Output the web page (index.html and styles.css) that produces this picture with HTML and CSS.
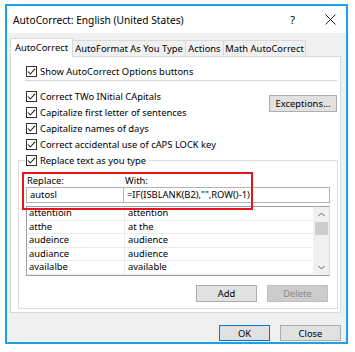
FILE: index.html
```html
<!DOCTYPE html>
<html lang="en">
<head>
    <meta charset="UTF-8">
    <title>AutoCorrect: English (United States)</title>
    <link rel="stylesheet" href="styles.css">
</head>
<body>

<div class="window">
    <div class="titlebar">
        <span class="title">AutoCorrect: English (United States)</span>
        <span class="help">?</span>
        <svg class="close-x" width="11" height="11" viewBox="0 0 11 11">
            <path d="M0.5 0.5 L10.5 10.5 M10.5 0.5 L0.5 10.5" stroke="#222" stroke-width="1" fill="none"/>
        </svg>
    </div>

    <div class="client">
        <div class="tabs">
            <div class="tab active">AutoCorrect</div>
            <div class="tab tab-format">AutoFormat As You Type</div>
            <div class="tab tab-actions">Actions</div>
            <div class="tab tab-math">Math AutoCorrect</div>
        </div>

        <div class="panel">
            <div class="check top-check">
                <svg class="box" width="11" height="11" viewBox="0 0 11 11"><rect x="0.5" y="0.5" width="10" height="10" fill="#fff" stroke="#333"/><path d="M2 5.5 L4.3 8 L9 2.8" stroke="#222" stroke-width="1.1" fill="none"/></svg>
                Show AutoCorrect Options buttons
            </div>
            <div class="sep"></div>

            <div class="options">
                <div class="checks">
                    <div class="check">
                        <svg class="box" width="11" height="11" viewBox="0 0 11 11"><rect x="0.5" y="0.5" width="10" height="10" fill="#fff" stroke="#333"/><path d="M2 5.5 L4.3 8 L9 2.8" stroke="#222" stroke-width="1.1" fill="none"/></svg>
                        Correct TWo INitial CApitals
                    </div>
                    <div class="check">
                        <svg class="box" width="11" height="11" viewBox="0 0 11 11"><rect x="0.5" y="0.5" width="10" height="10" fill="#fff" stroke="#333"/><path d="M2 5.5 L4.3 8 L9 2.8" stroke="#222" stroke-width="1.1" fill="none"/></svg>
                        Capitalize first letter of sentences
                    </div>
                    <div class="check">
                        <svg class="box" width="11" height="11" viewBox="0 0 11 11"><rect x="0.5" y="0.5" width="10" height="10" fill="#fff" stroke="#333"/><path d="M2 5.5 L4.3 8 L9 2.8" stroke="#222" stroke-width="1.1" fill="none"/></svg>
                        Capitalize names of days
                    </div>
                    <div class="check">
                        <svg class="box" width="11" height="11" viewBox="0 0 11 11"><rect x="0.5" y="0.5" width="10" height="10" fill="#fff" stroke="#333"/><path d="M2 5.5 L4.3 8 L9 2.8" stroke="#222" stroke-width="1.1" fill="none"/></svg>
                        Correct accidental use of cAPS LOCK key
                    </div>
                </div>
                <div class="btn exceptions">Exceptions...</div>
            </div>

            <fieldset class="group">
                <legend class="check">
                    <svg class="box" width="11" height="11" viewBox="0 0 11 11"><rect x="0.5" y="0.5" width="10" height="10" fill="#fff" stroke="#333"/><path d="M2 5.5 L4.3 8 L9 2.8" stroke="#222" stroke-width="1.1" fill="none"/></svg>
                    Replace text as you type
                </legend>

                <div class="entry">
                    <div class="labels">
                        <span class="col-a">Replace:</span>
                        <span>With:</span>
                    </div>
                    <div class="inputs">
                        <div class="input col-a">autosl</div>
                        <div class="input with">=IF(ISBLANK(B2),"",ROW()-1)</div>
                    </div>
                    <div class="highlight"></div>
                </div>

                <div class="list">
                    <div class="rows">
                        <div class="row"><span class="col-a">attentioin</span><span>attention</span></div>
                        <div class="row"><span class="col-a">atthe</span><span>at the</span></div>
                        <div class="row"><span class="col-a">audeince</span><span>audience</span></div>
                        <div class="row"><span class="col-a">audiance</span><span>audience</span></div>
                        <div class="row"><span class="col-a">availalbe</span><span>available</span></div>
                    </div>
                    <div class="scrollbar">
                        <svg width="7" height="5" viewBox="0 0 7 5"><path d="M0.5 4 L3.5 1 L6.5 4" stroke="#606060" fill="none"/></svg>
                        <div class="thumb"></div>
                        <svg class="down" width="7" height="5" viewBox="0 0 7 5"><path d="M0.5 1 L3.5 4 L6.5 1" stroke="#606060" fill="none"/></svg>
                    </div>
                </div>

                <div class="actions">
                    <div class="btn">Add</div>
                    <div class="btn disabled">Delete</div>
                </div>
            </fieldset>
        </div>

        <div class="footer">
            <div class="btn ok">OK</div>
            <div class="btn close">Close</div>
        </div>
    </div>
</div>

</body>
</html>
```

FILE: styles.css
```css
body {
    margin: 0;
    background: #fff;
    font-family: "Noto Sans", "Open Sans", sans-serif;
    font-size: 9.4px;
    color: #000;
}
.window {
    box-sizing: border-box;
    width: 343px;
    height: 340px;
    margin: 4px 0 0 5px;
    border: 2px solid #1ba3e6;
    display: flex;
    flex-direction: column;
}
.titlebar {
    height: 27px;
    background: #fff;
    display: flex;
    align-items: center;
    padding-left: 6px;
}
.title {
    font-size: 10.2px;
    flex: 1;
}
.help {
    font-size: 11px;
    margin-right: 30px;
}
.close-x {
    margin-right: 10px;
}
.client {
    flex: 1;
    background: #f0f0f0;
    padding: 5px 5px 0 3px;
}
.tabs {
    display: flex;
    align-items: flex-end;
    height: 18px;
    position: relative;
    z-index: 1;
}
.tab {
    box-sizing: border-box;
    height: 16px;
    line-height: 15px;
    text-align: center;
    white-space: nowrap;
    border: 1px solid #d9d9d9;
    border-left: none;
    border-bottom: none;
    background: #f0f0f0;
}
.tab.active {
    width: 63px;
    height: 19px;
    line-height: 17px;
    background: #fff;
    border-left: 1px solid #d9d9d9;
    margin-bottom: -1px;
}
.tab-format {
    width: 113px;
}
.tab-actions {
    width: 38px;
}
.tab-math {
    width: 82px;
}
.panel {
    box-sizing: border-box;
    height: 257px;
    background: #fff;
    border: 1px solid #d9d9d9;
    padding: 6px 3px 0 7px;
}
.check {
    display: flex;
    align-items: center;
    height: 16px;
    white-space: nowrap;
}
.check .box {
    margin-right: 3px;
    flex: none;
}
.top-check {
    padding-left: 8px;
}
.sep {
    height: 1px;
    background: #d5d5d5;
    margin: 1px 0 0 7px;
}
.options {
    display: flex;
    justify-content: space-between;
    align-items: flex-start;
    margin-top: 7px;
    padding-left: 8px;
}
.btn {
    box-sizing: border-box;
    display: flex;
    align-items: center;
    justify-content: center;
    background: #e1e1e1;
    border: 1px solid #adadad;
    height: 17px;
}
.exceptions {
    width: 68px;
    margin-top: 7px;
}
.group {
    margin: 0;
    width: 320px;
    box-sizing: border-box;
    border: 1px solid #dcdcdc;
    padding: 0 7px 6px 7px;
}
.group legend {
    padding: 0 3px 0 0;
    margin-left: 0;
}
.entry {
    position: relative;
    margin-top: 5px;
}
.labels {
    display: flex;
    height: 14px;
    align-items: center;
}
.col-a {
    width: 98px;
    flex: none;
}
.labels .col-a, .row .col-a {
    padding-left: 1px;
}
.inputs {
    display: flex;
    height: 16px;
}
.input {
    box-sizing: border-box;
    border: 1px solid #b4b4b4;
    background: #fff;
    padding-left: 3px;
    line-height: 14px;
    white-space: nowrap;
    overflow: hidden;
}
.input.with {
    flex: 1;
    margin-left: -1px;
}
.highlight {
    position: absolute;
    left: -4px;
    top: -1px;
    width: 231px;
    height: 38px;
    box-sizing: border-box;
    border: 2px solid #e8141a;
}
.list {
    box-sizing: border-box;
    margin-top: 3px;
    height: 70px;
    display: flex;
    border: 1px solid #a0a0a0;
    border-right-color: #dcdcdc;
    border-bottom-color: #a0a0a0;
}
.rows {
    flex: 1;
}
.row {
    box-sizing: border-box;
    display: flex;
    height: 13.6px;
    line-height: 12px;
    border-bottom: 1px solid #ececec;
    white-space: nowrap;
}
.row .col-a {
    border-right: 1px solid #ececec;
    padding-left: 2px;
    box-sizing: border-box;
    width: 98px;
}
.row span + span {
    padding-left: 3px;
}
.scrollbar {
    width: 16px;
    background: #f0f0f0;
    display: flex;
    flex-direction: column;
    align-items: center;
    padding-top: 5px;
    box-sizing: border-box;
}
.thumb {
    width: 13px;
    height: 13px;
    background: #cdcdcd;
    margin-top: 5px;
}
.scrollbar .down {
    margin-top: auto;
    margin-bottom: 5px;
}
.actions {
    display: flex;
    justify-content: flex-end;
    gap: 10px;
    margin-top: 9px;
    padding-right: 2px;
}
.actions .btn {
    width: 61px;
}
.btn.disabled {
    background: #cccccc;
    border-color: #bfbfbf;
    color: #8a8a8a;
}
.footer {
    display: flex;
    justify-content: flex-end;
    gap: 10px;
    margin-top: 12px;
}
.footer .btn {
    height: 16px;
}
.btn.ok {
    width: 51px;
    border-color: #0078d7;
}
.btn.close {
    width: 61px;
}
```
